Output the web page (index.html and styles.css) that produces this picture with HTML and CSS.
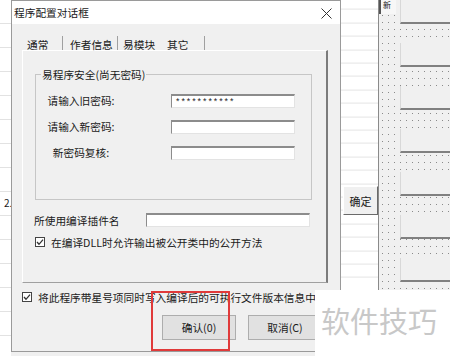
FILE: index.html
```html
<!DOCTYPE html>
<html lang="zh-CN">
<head>
  <meta charset="UTF-8">
  <meta name="viewport" content="width=device-width, initial-scale=1.0">
  <title>程序配置对话框</title>
  <link rel="stylesheet" href="styles.css">
</head>
<body>
  <div class="desk">
    <div class="sheet-left"><span class="row-no">2.</span></div>

    <div class="dialog">
      <div class="titlebar">
        <span class="title">程序配置对话框</span>
        <svg class="close" width="11" height="11" viewBox="0 0 11 11">
          <path d="M0.5 0.5 L10.5 10.5 M10.5 0.5 L0.5 10.5" stroke="#333" stroke-width="1" fill="none"/>
        </svg>
      </div>

      <div class="dialog-body">
        <div class="tabs">
          <div class="tab tab-general">通常</div>
          <div class="tab tab-author">作者信息</div>
          <div class="tab tab-module">易模块</div>
          <div class="tab tab-other">其它</div>
        </div>

        <div class="tab-panel">
          <div class="group">
            <div class="group-title">易程序安全(尚无密码)</div>
            <div class="pw-grid">
              <span class="pw-label">请输入旧密码:</span>
              <div class="edit edit-pw">***********</div>
              <span class="pw-label">请输入新密码:</span>
              <div class="edit"></div>
              <span class="pw-label">新密码复核:</span>
              <div class="edit"></div>
            </div>
          </div>

          <div class="plugin-row">
            <span class="plugin-label">所使用编译插件名</span>
            <div class="edit edit-plugin"></div>
          </div>

          <div class="check-row check-inner">
            <svg class="check" width="10" height="10" viewBox="0 0 10 10">
              <rect x="0.5" y="0.5" width="9" height="9" fill="#fff" stroke="#444"/>
              <path d="M2 5 L4 7.3 L8 2.6" stroke="#333" stroke-width="1.3" fill="none"/>
            </svg>
            <span>在编译DLL时允许输出被公开类中的公开方法</span>
          </div>
        </div>

        <div class="check-row check-outer">
          <svg class="check" width="10" height="10" viewBox="0 0 10 10">
            <rect x="0.5" y="0.5" width="9" height="9" fill="#fff" stroke="#444"/>
            <path d="M2 5 L4 7.3 L8 2.6" stroke="#333" stroke-width="1.3" fill="none"/>
          </svg>
          <span>将此程序带星号项同时写入编译后的可执行文件版本信息中</span>
        </div>

        <div class="buttons">
          <button class="btn">确认(0)</button>
          <button class="btn">取消(C)</button>
        </div>
      </div>
    </div>

    <div class="sheet-mid">
      <button class="ok-btn">确定</button>
    </div>

    <div class="designer">
      <div class="tag">新</div>
      <div class="ctl"></div>
      <div class="ctl"></div>
      <div class="ctl"></div>
      <div class="ctl"></div>
      <div class="ctl"></div>
      <div class="ctl"></div>
      <div class="ctl"></div>
    </div>
  </div>

  <div class="mark-box"></div>
  <div class="watermark">软件技巧</div>
</body>
</html>
```

FILE: styles.css
```css
* {
  box-sizing: border-box;
}

body {
  margin: 0;
  width: 450px;
  height: 356px;
  overflow: hidden;
  position: relative;
  background-color: #f0f0f0;
  font-family: "Noto Sans CJK SC", sans-serif;
  font-size: 10.7px;
  color: #1a1a1a;
}

.desk {
  display: flex;
  height: 356px;
}

/* sheet behind the dialog, left */
.sheet-left {
  width: 11px;
  flex: none;
  background: repeating-linear-gradient(to bottom, #ffffff 0, #ffffff 23px, #e2e2e2 23px, #e2e2e2 24px);
  padding-top: 196px;
}

.row-no {
  display: block;
  padding-left: 4px;
  font-size: 10px;
  line-height: 14px;
}

/* dialog */
.dialog {
  width: 330px;
  height: 352px;
  flex: none;
  border: 1px solid #9a9a9a;
  background-color: #f0f0f0;
  display: flex;
  flex-direction: column;
}

.titlebar {
  height: 23px;
  flex: none;
  background-color: #ffffff;
  display: flex;
  align-items: center;
  justify-content: space-between;
  padding: 1px 8px 0 2px;
}

.title {
  line-height: 14px;
}

.dialog-body {
  padding-left: 10px;
}

.tabs {
  display: flex;
  margin-top: 12px;
  height: 14px;
}

.tab {
  height: 14px;
  padding-top: 3px;
  line-height: 11px;
  border-right: 1px solid #a0a0a0;
  white-space: nowrap;
}

.tab-general {
  width: 41px;
  padding-left: 5px;
}

.tab-author {
  width: 55px;
  padding-left: 7px;
}

.tab-module {
  width: 42px;
  padding-left: 5px;
  border-right: none;
}

.tab-other {
  width: 45px;
  padding-left: 7px;
}

.tab-panel {
  width: 306px;
  height: 233px;
  border-top: 1px solid #ffffff;
  border-left: 1px solid #ffffff;
  border-right: 2px solid #7c7c7c;
  border-bottom: 1px solid #a0a0a0;
  padding: 23px 0 0 12px;
}

.group {
  width: 277px;
  height: 126px;
  border: 1px solid #c6c6c6;
}

.group-title {
  width: max-content;
  margin: -8px 0 0 5px;
  padding: 0 1px;
  line-height: 15px;
  background-color: #f0f0f0;
}

.pw-grid {
  display: grid;
  grid-template-columns: 90px 124px;
  grid-auto-rows: 14px;
  column-gap: 45px;
  row-gap: 12px;
  align-items: center;
  margin-top: 12px;
}

.pw-label {
  text-align: center;
  line-height: 14px;
  white-space: nowrap;
}

.edit {
  height: 14px;
  background-color: #ffffff;
  border-top: 2px solid #8c8c8c;
  border-left: 1px solid #8c8c8c;
  border-right: 1px solid #e3e3e3;
  border-bottom: 1px solid #e3e3e3;
}

.edit-pw {
  padding: 2px 0 0 3px;
  font-family: "Liberation Mono", monospace;
  font-size: 9px;
  line-height: 11px;
  color: #222222;
  overflow: hidden;
}

.plugin-row {
  display: flex;
  align-items: center;
  height: 14px;
  margin: 13px 0 0 -1px;
}

.plugin-label {
  width: 112px;
  white-space: nowrap;
}

.edit-plugin {
  width: 164px;
}

.check-row {
  display: flex;
  align-items: center;
  gap: 6px;
  height: 12px;
  white-space: nowrap;
}

.check {
  flex: none;
}

.check-inner {
  margin-top: 9px;
}

.check-outer {
  margin-top: 8px;
}

.buttons {
  display: flex;
  gap: 12px;
  margin-top: 12px;
  padding-left: 140px;
}

.btn {
  width: 74px;
  height: 25px;
  padding: 0;
  background-color: #e1e1e1;
  border: 1px solid #adadad;
  font: inherit;
  color: #1a1a1a;
}

/* sheet between dialog and designer */
.sheet-mid {
  width: 37px;
  flex: none;
  background: repeating-linear-gradient(to bottom, #ffffff 0, #ffffff 12.4px, #e4e4e4 12.4px, #e4e4e4 13.4px);
  background-position: 0 -3.4px;
  padding-top: 186px;
}

.ok-btn {
  display: block;
  margin-left: 2px;
  width: 35px;
  height: 29px;
  padding: 0;
  background-color: #f0f0f0;
  border: 1px solid;
  border-color: #ffffff #6a6a6a #6a6a6a #ffffff;
  font-family: "Noto Sans CJK SC", sans-serif;
  font-size: 11px;
  color: #1a1a1a;
}

/* form designer with its dot grid */
.designer {
  flex: 1;
  border-left: 1px solid #8a8a8a;
  background-color: #f0f0f0;
  background-image:
    linear-gradient(to bottom, transparent 1px, #f0f0f0 1px),
    linear-gradient(to right, #8a8a8a 1px, transparent 1px);
  background-size: 6px 7px;
  background-position: 3px 1px;
  display: grid;
  grid-template-columns: 21px 1fr;
  grid-auto-rows: 24px;
  row-gap: 19px;
  align-content: start;
}

.tag {
  grid-column: 1;
  grid-row: 1;
  height: 14px;
  width: 17px;
  border-left: 2px solid #555555;
  background-color: #f7f7f7;
  padding-left: 2px;
  font-size: 8px;
  line-height: 9px;
}

.ctl {
  grid-column: 2;
  background-color: #f0f0f0;
  border-left: 1px solid #d8d8d8;
  border-bottom: 2px solid #808080;
}

/* annotation and watermark lying over the shot */
.mark-box {
  position: absolute;
  left: 151px;
  top: 291px;
  width: 79px;
  height: 60px;
  border: 2px solid #e03a3a;
}

.watermark {
  position: absolute;
  left: 315px;
  top: 290px;
  width: 135px;
  height: 66px;
  padding: 14px 0 0 6px;
  background-color: #ffffff;
  color: #c8c8c8;
  font-size: 29px;
  line-height: 32px;
  white-space: nowrap;
}
```
